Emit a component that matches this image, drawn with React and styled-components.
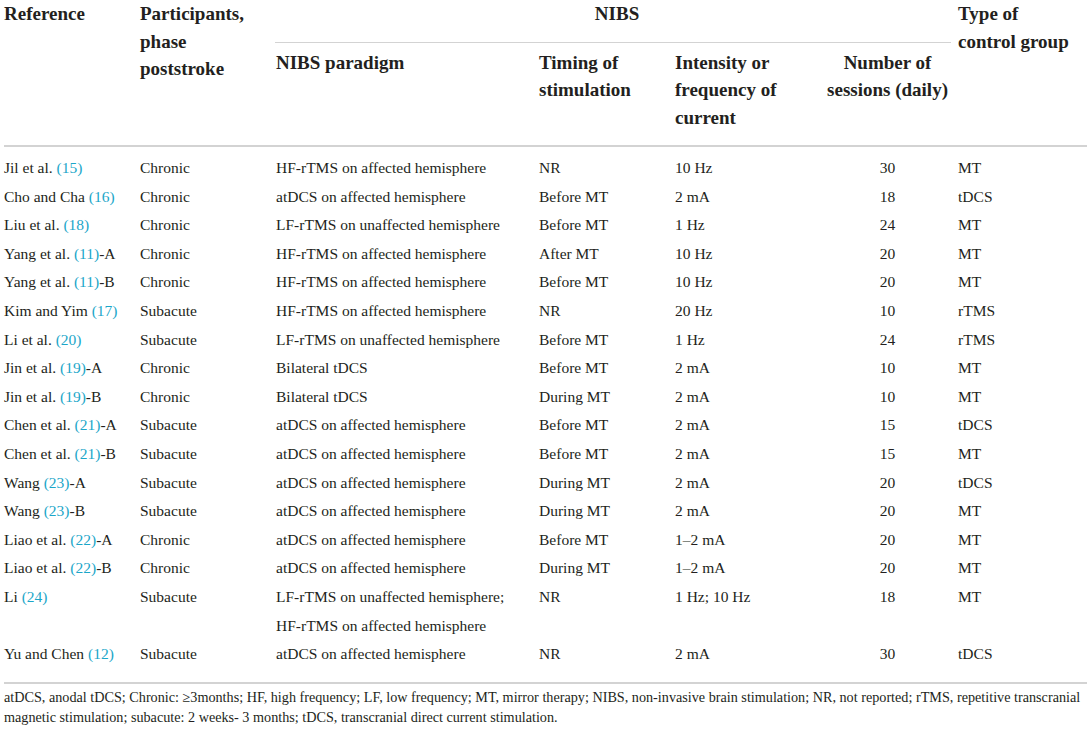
import React from 'react';
import styled, { createGlobalStyle } from 'styled-components';

const GlobalStyle = createGlobalStyle`
  html, body {
    margin: 0;
    padding: 0;
    background: #fff;
  }
  body {
    font-family: "Liberation Serif", "Times New Roman", serif;
    color: #231f20;
  }
`;

const rows = [
  { ref: 'Jil et al.', cite: '15', phase: 'Chronic', paradigm: ['HF-rTMS on affected hemisphere'], timing: 'NR', intensity: '10 Hz', sessions: 30, control: 'MT' },
  { ref: 'Cho and Cha', cite: '16', phase: 'Chronic', paradigm: ['atDCS on affected hemisphere'], timing: 'Before MT', intensity: '2 mA', sessions: 18, control: 'tDCS' },
  { ref: 'Liu et al.', cite: '18', phase: 'Chronic', paradigm: ['LF-rTMS on unaffected hemisphere'], timing: 'Before MT', intensity: '1 Hz', sessions: 24, control: 'MT' },
  { ref: 'Yang et al.', cite: '11', suffix: '-A', phase: 'Chronic', paradigm: ['HF-rTMS on affected hemisphere'], timing: 'After MT', intensity: '10 Hz', sessions: 20, control: 'MT' },
  { ref: 'Yang et al.', cite: '11', suffix: '-B', phase: 'Chronic', paradigm: ['HF-rTMS on affected hemisphere'], timing: 'Before MT', intensity: '10 Hz', sessions: 20, control: 'MT' },
  { ref: 'Kim and Yim', cite: '17', phase: 'Subacute', paradigm: ['HF-rTMS on affected hemisphere'], timing: 'NR', intensity: '20 Hz', sessions: 10, control: 'rTMS' },
  { ref: 'Li et al.', cite: '20', phase: 'Subacute', paradigm: ['LF-rTMS on unaffected hemisphere'], timing: 'Before MT', intensity: '1 Hz', sessions: 24, control: 'rTMS' },
  { ref: 'Jin et al.', cite: '19', suffix: '-A', phase: 'Chronic', paradigm: ['Bilateral tDCS'], timing: 'Before MT', intensity: '2 mA', sessions: 10, control: 'MT' },
  { ref: 'Jin et al.', cite: '19', suffix: '-B', phase: 'Chronic', paradigm: ['Bilateral tDCS'], timing: 'During MT', intensity: '2 mA', sessions: 10, control: 'MT' },
  { ref: 'Chen et al.', cite: '21', suffix: '-A', phase: 'Subacute', paradigm: ['atDCS on affected hemisphere'], timing: 'Before MT', intensity: '2 mA', sessions: 15, control: 'tDCS' },
  { ref: 'Chen et al.', cite: '21', suffix: '-B', phase: 'Subacute', paradigm: ['atDCS on affected hemisphere'], timing: 'Before MT', intensity: '2 mA', sessions: 15, control: 'MT' },
  { ref: 'Wang', cite: '23', suffix: '-A', phase: 'Subacute', paradigm: ['atDCS on affected hemisphere'], timing: 'During MT', intensity: '2 mA', sessions: 20, control: 'tDCS' },
  { ref: 'Wang', cite: '23', suffix: '-B', phase: 'Subacute', paradigm: ['atDCS on affected hemisphere'], timing: 'During MT', intensity: '2 mA', sessions: 20, control: 'MT' },
  { ref: 'Liao et al.', cite: '22', suffix: '-A', phase: 'Chronic', paradigm: ['atDCS on affected hemisphere'], timing: 'Before MT', intensity: '1–2 mA', sessions: 20, control: 'MT' },
  { ref: 'Liao et al.', cite: '22', suffix: '-B', phase: 'Chronic', paradigm: ['atDCS on affected hemisphere'], timing: 'During MT', intensity: '1–2 mA', sessions: 20, control: 'MT' },
  { ref: 'Li', cite: '24', phase: 'Subacute', paradigm: ['LF-rTMS on unaffected hemisphere;', 'HF-rTMS on affected hemisphere'], timing: 'NR', intensity: '1 Hz; 10 Hz', sessions: 18, control: 'MT' },
  { ref: 'Yu and Chen', cite: '12', phase: 'Subacute', paradigm: ['atDCS on affected hemisphere'], timing: 'NR', intensity: '2 mA', sessions: 30, control: 'tDCS' },
];

const Page = styled.div`
  padding: 0 4px;
  width: 1083px;
`;

const Table = styled.table`
  width: 1083px;
  border-collapse: collapse;
  table-layout: fixed;
`;

const Head = styled.thead`
  border-bottom: 2px solid #d3d3d3;
`;

const Th = styled.th`
  font-size: 19px;
  font-weight: bold;
  line-height: 27.5px;
  text-align: ${(p) => (p.$center ? 'center' : 'left')};
  vertical-align: top;
  white-space: nowrap;
  padding: ${(p) => (p.$sub ? '6px 0 14px' : '0')};
`;

const GroupLabel = styled.div`
  text-align: center;
  padding: 0 0 14px 8px;
  margin: 0 7px 0 -1px;
  border-bottom: 1.5px solid #d3d3d3;
`;

const Body = styled.tbody`
  border-bottom: 2px solid #d3d3d3;

  tr:first-child td {
    padding-top: 7px;
  }

  tr:last-child td {
    padding-bottom: 13px;
  }
`;

const Td = styled.td`
  font-size: 15.5px;
  line-height: 28.6px;
  padding: 0;
  vertical-align: top;
  white-space: nowrap;
  text-align: ${(p) => (p.$center ? 'center' : 'left')};
`;

const Cite = styled.span`
  color: #1ba6c9;
`;

const Note = styled.p`
  margin: 3px 0 0;
  font-size: 14.2px;
  line-height: 20px;
`;

export default function App() {
  return (
    <Page>
      <GlobalStyle />
      <Table>
        <colgroup>
          <col style={{ width: 136 }} />
          <col style={{ width: 136 }} />
          <col style={{ width: 263 }} />
          <col style={{ width: 136 }} />
          <col style={{ width: 142 }} />
          <col style={{ width: 141 }} />
          <col style={{ width: 129 }} />
        </colgroup>
        <Head>
          <tr>
            <Th rowSpan={2}>Reference</Th>
            <Th rowSpan={2}>
              Participants,<br />phase<br />poststroke
            </Th>
            <Th colSpan={4}>
              <GroupLabel>NIBS</GroupLabel>
            </Th>
            <Th rowSpan={2}>
              Type of<br />control group
            </Th>
          </tr>
          <tr>
            <Th $sub>NIBS paradigm</Th>
            <Th $sub>
              Timing of<br />stimulation
            </Th>
            <Th $sub>
              Intensity or<br />frequency of<br />current
            </Th>
            <Th $sub $center>
              Number of<br />sessions (daily)
            </Th>
          </tr>
        </Head>
        <Body>
          {rows.map((r, i) => (
            <tr key={i}>
              <Td>
                {r.ref} <Cite>({r.cite})</Cite>
                {r.suffix}
              </Td>
              <Td>{r.phase}</Td>
              <Td>
                {r.paradigm.map((line, j) => (
                  <div key={j}>{line}</div>
                ))}
              </Td>
              <Td>{r.timing}</Td>
              <Td>{r.intensity}</Td>
              <Td $center>{r.sessions}</Td>
              <Td>{r.control}</Td>
            </tr>
          ))}
        </Body>
      </Table>
      <Note>
        atDCS, anodal tDCS; Chronic: ≥3months; HF, high frequency; LF, low frequency; MT, mirror therapy; NIBS,
        non-invasive brain stimulation; NR, not reported; rTMS, repetitive transcranial magnetic stimulation;
        subacute: 2 weeks- 3 months; tDCS, transcranial direct current stimulation.
      </Note>
    </Page>
  );
}
